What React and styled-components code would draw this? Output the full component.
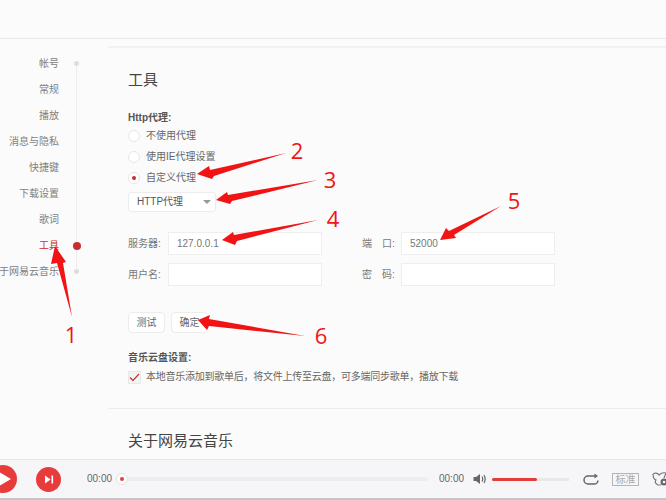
import React from "react";
import styled, { createGlobalStyle } from "styled-components";

const Global = createGlobalStyle`
  html, body { margin: 0; padding: 0; background: #fbfbfb; }
  * { box-sizing: border-box; }
`;

const Page = styled.div`
  position: relative;
  width: 666px;
  height: 500px;
  overflow: hidden;
  display: flex;
  flex-direction: column;
  background: #fbfbfb;
  color: #666;
  font: 10px/14px "Liberation Sans", "Noto Sans CJK SC", sans-serif;
`;

const TopBar = styled.header`
  flex: none;
  height: 39px;
  border-bottom: 1px solid #e9e9e9;
`;

const Body = styled.div`
  flex: 1;
  min-height: 0;
  display: flex;
`;

const Sidebar = styled.nav`
  position: relative;
  flex: none;
  width: 108px;
  padding-top: 11px;
  &::before {
    content: "";
    position: absolute;
    left: 76px;
    top: 25px;
    width: 1px;
    height: 207px;
    background: #eeeeee;
  }
`;

const NavItem = styled.div`
  position: relative;
  display: flex;
  justify-content: flex-end;
  align-items: center;
  width: 59px;
  height: 26px;
  padding-top: 2px;
  white-space: nowrap;
  color: ${(p) => (p.$active ? "#c62f2f" : "#808080")};
`;

const NavDot = styled.i`
  position: absolute;
  left: ${(p) => (p.$active ? "72.5px" : "74px")};
  top: ${(p) => (p.$active ? "9.5px" : "11px")};
  width: ${(p) => (p.$active ? "8px" : "5px")};
  height: ${(p) => (p.$active ? "8px" : "5px")};
  border-radius: 50%;
  background: ${(p) => (p.$active ? "#c62f2f" : "#dedede")};
`;

const Content = styled.main`
  flex: 1;
  margin-top: 7px;
  padding: 0 0 0 20px;
  border-top: 2px solid #f1f1f1;
  overflow: hidden;
`;

const Heading = styled.h2`
  margin: ${(p) => p.$top}px 0 0;
  font-size: 15px;
  line-height: 22px;
  font-weight: 400;
  color: #444;
`;

const Strong = styled.div`
  font-weight: 700;
  color: #555;
  line-height: 14px;
`;

const ProxyLabel = styled(Strong)`
  margin-top: 20px;
`;

const RadioList = styled.div`
  display: flex;
  flex-direction: column;
  gap: 7px;
  margin-top: 4px;
`;

const RadioRow = styled.label`
  display: flex;
  align-items: center;
  gap: 6px;
  height: 14px;
`;

const RadioMark = styled.span`
  flex: none;
  width: 12px;
  height: 12px;
  border-radius: 50%;
  border: 1px solid #e6e6e6;
  background: #fff;
  display: flex;
  align-items: center;
  justify-content: center;
  &::after {
    content: "";
    display: ${(p) => (p.$on ? "block" : "none")};
    width: 4px;
    height: 4px;
    border-radius: 50%;
    background: #c62f2f;
  }
`;

const Select = styled.div`
  display: flex;
  align-items: center;
  justify-content: space-between;
  width: 88px;
  height: 20px;
  margin-top: 7px;
  padding: 0 4px 0 8px;
  background: #fff;
  border: 1px solid #ececec;
  border-radius: 3px;
  color: #555;
  &::after {
    content: "";
    border-left: 4px solid transparent;
    border-right: 4px solid transparent;
    border-top: 4px solid #999;
  }
`;

const FormGrid = styled.div`
  display: grid;
  grid-template-columns: 234px 193px;
  row-gap: 8px;
  margin-top: 20px;
`;

const Field = styled.div`
  display: flex;
  align-items: center;
  gap: ${(p) => p.$gap}px;
`;

const FieldLabel = styled.span`
  flex: none;
  width: 34px;
  white-space: pre;
  color: #777;
`;

const Input = styled.div`
  width: 154px;
  height: 23px;
  padding-left: 8px;
  line-height: 21px;
  background: #fff;
  border: 1px solid #eeeeee;
  color: #777;
`;

const Buttons = styled.div`
  display: flex;
  gap: 6px;
  margin-top: 26px;
`;

const Button = styled.button`
  width: 37px;
  height: 21px;
  padding: 0;
  font: inherit;
  color: #666;
  background: #fff;
  border: 1px solid #ececec;
  border-radius: 4px;
`;

const CloudLabel = styled(Strong)`
  margin-top: 18px;
`;

const CheckRow = styled.label`
  display: flex;
  align-items: center;
  gap: 5px;
  margin-top: 5px;
  white-space: nowrap;
  letter-spacing: -0.25px;
  color: #666;
`;

const CheckBox = styled.span`
  flex: none;
  width: 13px;
  height: 13px;
  display: flex;
  align-items: center;
  justify-content: center;
  background: #f3f3f3;
  border: 1px solid #e8e8e8;
`;

const Divider = styled.hr`
  margin: 24px 0 0 -20px;
  border: 0;
  border-top: 1px solid #ececec;
`;

const Player = styled.footer`
  flex: none;
  height: 41px;
  display: flex;
  align-items: center;
  background: #f6f6f8;
  border-top: 1px solid #e6e6e8;
  border-bottom: 2px solid #c4c4c4;
`;

const RoundBtn = styled.div`
  flex: none;
  display: flex;
  align-items: center;
  justify-content: center;
  border-radius: 50%;
  background: #e83c3c;
  width: ${(p) => p.$size}px;
  height: ${(p) => p.$size}px;
  margin-left: ${(p) => p.$ml}px;
`;

const Time = styled.span`
  flex: none;
  font-size: 10px;
  color: #666;
  margin-left: ${(p) => p.$ml}px;
  width: 24px;
`;

const Progress = styled.div`
  position: relative;
  flex: none;
  width: 312px;
  height: 4px;
  margin-left: 5px;
  background: #ededed;
  border-radius: 2px;
`;

const Handle = styled.span`
  position: absolute;
  left: 0;
  top: -4px;
  width: 12px;
  height: 12px;
  border-radius: 50%;
  background: #fff;
  border: 1px solid #e2e2e2;
  display: flex;
  align-items: center;
  justify-content: center;
  &::after {
    content: "";
    width: 4px;
    height: 4px;
    border-radius: 50%;
    background: #e83c3c;
  }
`;

const IconSlot = styled.span`
  flex: none;
  display: flex;
  margin-left: ${(p) => p.$ml}px;
`;

const Volume = styled.div`
  flex: none;
  width: 77px;
  height: 3px;
  margin-left: 5px;
  background: #e8e8e8;
`;

const VolumeFill = styled.div`
  height: 100%;
  background: #e83c3c;
  border-radius: 2px;
`;

const Quality = styled.span`
  flex: none;
  width: 27px;
  height: 13px;
  margin-left: 13px;
  border: 1px solid #b5b5b5;
  color: #aaa;
  font-size: 10px;
  line-height: 11px;
  text-align: center;
`;

const Overlay = styled.svg`
  position: absolute;
  left: 0;
  top: 0;
  pointer-events: none;
`;

const Mark = styled.span`
  position: absolute;
  color: #f01414;
  font: 22px/24px "Open Sans", "Liberation Sans", sans-serif;
  transform: translate(-50%, -50%);
  pointer-events: none;
`;

const nav = ["帐号", "常规", "播放", "消息与隐私", "快捷键", "下载设置", "歌词", "工具", "关于网易云音乐"];

const arrows = [
  "72,317 63,263 66,262 55,246 51,264 57,263",
  "286,153 214,176 212,179 197,174 209,166 210,170",
  "318,180 232,201 230,204 216,200 227,192 228,195",
  "318,220 237,241 235,245 222,240 233,232 234,235",
  "501,206 454,235 456,238 440,240 446,228 449,231",
  "305,336 209,326 207,330 198,320 210,315 209,319",
];

const marks = [
  ["1", 71, 334],
  ["2", 297, 150],
  ["3", 330, 179],
  ["4", 333, 218],
  ["5", 514, 200],
  ["6", 321, 335],
];

export default function App() {
  return (
    <Page>
      <Global />
      <TopBar />
      <Body>
        <Sidebar>
          {nav.map((n, i) => (
            <NavItem key={n} $active={i === 7}>
              {n}
              {(i === 0 || i === 7 || i === 8) && <NavDot $active={i === 7} />}
            </NavItem>
          ))}
        </Sidebar>
        <Content>
          <Heading $top={21}>工具</Heading>
          <ProxyLabel>Http代理:</ProxyLabel>
          <RadioList>
            <RadioRow><RadioMark />不使用代理</RadioRow>
            <RadioRow><RadioMark />使用IE代理设置</RadioRow>
            <RadioRow><RadioMark $on />自定义代理</RadioRow>
          </RadioList>
          <Select>HTTP代理</Select>
          <FormGrid>
            <Field $gap={6}><FieldLabel>服务器:</FieldLabel><Input>127.0.0.1</Input></Field>
            <Field $gap={5}><FieldLabel>{"端\u3000口:"}</FieldLabel><Input>52000</Input></Field>
            <Field $gap={6}><FieldLabel>用户名:</FieldLabel><Input /></Field>
            <Field $gap={5}><FieldLabel>{"密\u3000码:"}</FieldLabel><Input /></Field>
          </FormGrid>
          <Buttons>
            <Button>测试</Button>
            <Button>确定</Button>
          </Buttons>
          <CloudLabel>音乐云盘设置:</CloudLabel>
          <CheckRow>
            <CheckBox>
              <svg width="11" height="9" viewBox="0 0 11 9" fill="none">
                <path d="M1 4.5 L4 7.5 L10 1" stroke="#c62f2f" strokeWidth="1.2" />
              </svg>
            </CheckBox>
            {"本地音乐添加到歌单后\uFF0C将文件上传至云盘\uFF0C可多端同步歌单\uFF0C播放下载"}
          </CheckRow>
          <Divider />
          <Heading $top={21}>关于网易云音乐</Heading>
        </Content>
      </Body>
      <Player>
        <RoundBtn $size={28} $ml={-11}>
          <svg width="14" height="16" viewBox="0 0 14 16" style={{ marginLeft: 3 }}>
            <path d="M1 1 L13 8 L1 15 Z" fill="#fff" />
          </svg>
        </RoundBtn>
        <RoundBtn $size={25} $ml={19}>
          <svg width="10" height="9" viewBox="0 0 10 9">
            <path d="M1 0.5 L6.5 4.5 L1 8.5 Z" fill="#fff" />
            <rect x="7.5" y="0.5" width="1.6" height="8" fill="#fff" />
          </svg>
        </RoundBtn>
        <Time $ml={26}>00:00</Time>
        <Progress><Handle /></Progress>
        <Time $ml={11}>00:00</Time>
        <IconSlot $ml={10}>
          <svg width="14" height="12" viewBox="0 0 14 12" fill="none">
            <path d="M0.5 4 H3 L7 1 V11 L3 8 H0.5 Z" fill="#666" />
            <path d="M9 3.5 Q10.5 6 9 8.5 M11 2 Q13.4 6 11 10" stroke="#666" strokeWidth="1.2" />
          </svg>
        </IconSlot>
        <Volume><VolumeFill style={{ width: "59%" }} /></Volume>
        <IconSlot $ml={14}>
          <svg width="16" height="13" viewBox="0 0 16 13" fill="none">
            <path d="M12.5 3 H5 A4 4 0 0 0 5 11 H11 A4 4 0 0 0 15 7.5" stroke="#666" strokeWidth="1.5" />
            <path d="M11.5 0.5 L15 3 L11.5 5.5 Z" fill="#666" />
          </svg>
        </IconSlot>
        <Quality>标准</Quality>
        <IconSlot $ml={13}>
          <svg width="16" height="16" viewBox="0 0 16 16" fill="none">
            <path d="M1 3 Q5 1 7 4 Q10 1 14 2 L12 7 M1 3 Q1 8 4 9 Q2 12 6 14 H9" stroke="#777" strokeWidth="1.2" />
            <circle cx="12" cy="11" r="3.5" fill="#666" />
            <circle cx="12" cy="11" r="1.3" fill="#f6f6f8" />
          </svg>
        </IconSlot>
      </Player>
      <Overlay width="666" height="500" viewBox="0 0 666 500">
        {arrows.map((a) => <polygon key={a} points={a} fill="#f01414" />)}
      </Overlay>
      {marks.map(([t, x, y]) => (
        <Mark key={t} style={{ left: x, top: y }}>{t}</Mark>
      ))}
    </Page>
  );
}
